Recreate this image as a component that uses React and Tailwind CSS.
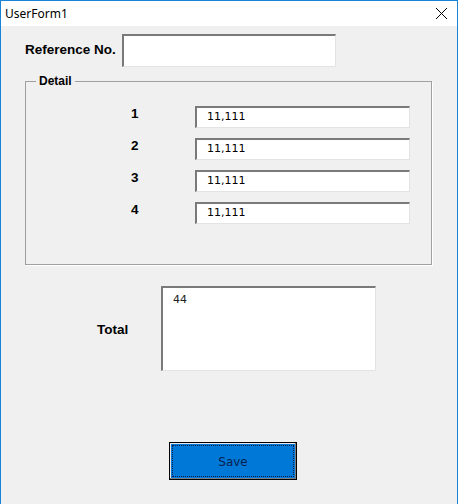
import React from 'react';

const rows = ['1', '2', '3', '4'];

const sunken =
  'bg-white border-t-2 border-l-2 border-b border-r border-t-[#7a7a7a] border-l-[#7a7a7a] border-b-[#e3e3e3] border-r-[#e3e3e3]';

const App = () => {
  return (
    <div
      className="w-[458px] h-[504px] bg-[#f0f0f0] border-l border-r border-t border-[#1883d7] flex flex-col"
      style={{ fontFamily: 'Tahoma, "DejaVu Sans", sans-serif' }}
    >
      {/* title bar */}
      <div className="h-[25px] bg-white flex items-center justify-between pl-[4px] pr-[8px] shrink-0">
        <span className="text-[12px] text-black" style={{ fontFamily: '"Noto Sans", "Open Sans", sans-serif' }}>
          UserForm1
        </span>
        <svg width="13" height="13" viewBox="0 0 13 13" className="mr-[1px]">
          <path d="M1 1 L12 12 M12 1 L1 12" stroke="#000" strokeWidth="1" />
        </svg>
      </div>

      {/* reference no */}
      <div className="flex items-center mt-[8px] pl-[24px]">
        <span className="w-[97px] text-[13.5px] font-bold text-black" style={{ fontFamily: '"Liberation Sans", Arial, sans-serif' }}>
          Reference No.
        </span>
        <div className={`w-[214px] h-[33px] ${sunken}`}></div>
      </div>

      {/* detail frame */}
      <fieldset className="ml-[24px] mt-[8px] w-[407px] h-[190px] border border-[#a0a0a0] shadow-[1px_1px_0_#ffffff] pt-[19px]">
        <legend className="ml-[10px] px-[3px] text-[12px] font-bold text-black leading-[12px]" style={{ fontFamily: '"Liberation Sans", Arial, sans-serif' }}>
          Detail
        </legend>
        <div className="flex flex-col gap-[10px]">
          {rows.map((r) => (
            <div key={r} className="flex items-center">
              <span className="w-[169px] pl-[105px] text-[13.5px] font-bold text-black -mt-[5px]" style={{ fontFamily: '"Liberation Sans", Arial, sans-serif' }}>
                {r}
              </span>
              <div className={`w-[215px] h-[22px] ${sunken} flex items-center pl-[10px] text-[11px] text-black`}>
                11,111
              </div>
            </div>
          ))}
        </div>
      </fieldset>

      {/* total */}
      <div className="flex items-center mt-[21px] pl-[96px]">
        <span className="w-[64px] pt-[4px] text-[13.5px] font-bold text-black" style={{ fontFamily: '"Liberation Sans", Arial, sans-serif' }}>
          Total
        </span>
        <div className={`w-[215px] h-[85px] ${sunken} pl-[10px] pt-[4px] text-[11px] text-[#222]`}>
          44
        </div>
      </div>

      {/* save */}
      <div className="mt-[71px] pl-[168px]">
        <button className="w-[128px] h-[38px] border border-black bg-[#0078d7] p-[2px] shadow-[inset_-1px_-1px_0_#808080,inset_1px_1px_0_#e8e8e8]">
          <div className="w-full h-full border border-dotted border-[#0b1f4f] flex items-center justify-center pt-[2px] text-[12px] text-[#0b1f4f]">
            Save
          </div>
        </button>
      </div>
    </div>
  );
};

export default App;
